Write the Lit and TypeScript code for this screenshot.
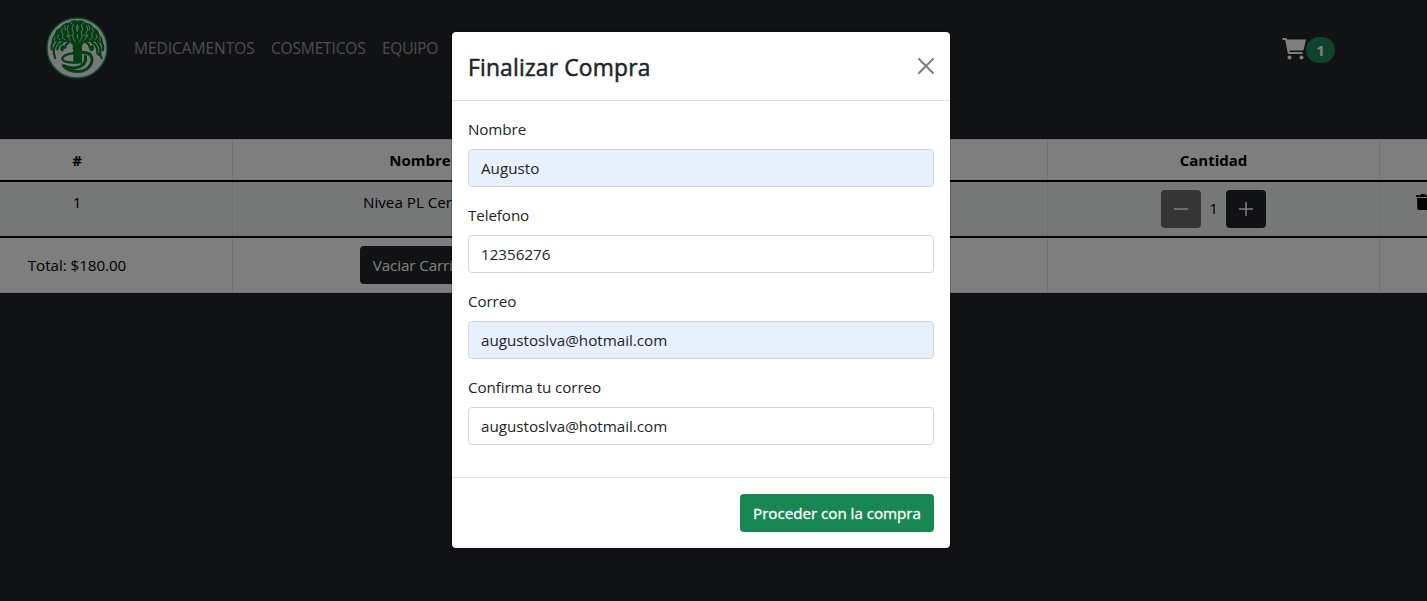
import { LitElement, html, css, svg } from "lit";
import { customElement, property } from "lit/decorators.js";
import { classMap } from "lit/directives/class-map.js";

const FONT = css`"Open Sans", "Noto Sans", sans-serif`;

@customElement("brand-logo")
export class BrandLogo extends LitElement {
  static styles = css`
    :host { display: block; width: 62px; height: 62px; }
    svg { display: block; width: 100%; height: 100%; }
    .disc { fill: #f0f0f0; stroke: #139a56; stroke-width: 4; }
    .ink { fill: #007d26; }
    .crown { fill: #007d26; }
    .branch { fill: none; stroke: #007d26; stroke-width: 6.500; stroke-linecap: round; }
    .gap { fill: none; stroke: #e4e8e4; stroke-width: 2.600; stroke-linecap: round; }
    .body { fill: none; stroke: #007d26; stroke-linecap: round; stroke-linejoin: round; }
    .loop { stroke-width: 7; }
    .bowl { stroke-width: 9; }
  `;
  render() {
    return html`<svg viewBox="49 51 184 185" aria-label="Logo">
      <circle class="disc" cx="141" cy="143.500" r="89.500" />
      <path class="crown" d="M66 128Q64 112 74 104Q76 88 92 82Q100 68 116 68Q128 58 142 62Q158 58 168 68Q184 70 190 82Q206 88 208 104Q220 114 217 130Q200 122 182 126Q164 122 156 136H128Q122 122 104 126Q84 122 66 128Z" />
      <path class="gap" d="M136 124Q124 112 130 98Q122 88 130 74M148 124Q160 112 154 98Q162 88 154 74M142 116V104M142 94Q136 84 142 74Q148 84 142 94M122 120Q108 110 116 98Q106 88 116 76M162 120Q176 110 168 98Q178 88 168 76M106 120Q92 112 100 102Q90 96 98 84M178 120Q192 112 184 102Q194 96 186 84M90 118Q78 114 86 104M194 118Q206 114 198 104M74 122Q70 116 76 110M210 122Q214 116 208 110M106 90Q108 80 104 76M178 90Q182 80 176 76M124 104Q118 110 112 108M160 104Q166 110 172 108M122 66L126 72M162 66L158 72" />
      <path class="branch" d="M70 126Q62 138 66 148M84 126Q70 138 72 162M98 128Q84 134 82 148M214 126Q222 138 218 150M200 126Q214 138 210 164L215 174M186 128Q200 134 202 152Q200 160 206 164M72 160L76 174M116 128Q106 132 106 142Q94 146 98 150M168 128Q178 130 178 140M187 138Q192 148 184 150Q176 146 187 138M100 138Q90 144 96 150" />
      <path class="ink" d="M129 133H156V190H130V154Q126 146 129 133Z" />
      <path class="body loop" d="M130 159Q98 164 97 176Q98 188 140 187" />
      <path class="body bowl" d="M158 157Q184 156 186 178Q184 202 158 212Q116 218 100 196Q126 208 150 199Q170 190 166 168" />
    </svg>`;
  }
}

@customElement("store-nav")
export class StoreNav extends LitElement {
  static styles = css`
    :host { display: block; }
    .bar { display: flex; align-items: center; height: 96px; padding: 0 92px 0 46px; font: 15.5px/24px ${FONT}; }
    .links { display: flex; gap: 16px; margin-left: 26px; flex: 1; color: rgba(255, 255, 255, 0.55); }
    .link { white-space: nowrap; }
    .l0 { width: 121px; letter-spacing: -0.03px; }
    .l1 { width: 95px; letter-spacing: -0.15px; }
    .l2 { letter-spacing: -0.25px; }
    .cart { display: flex; align-items: center; padding-top: 3px; }
    .cart svg { display: block; width: 24px; height: 22px; margin-bottom: 2px; fill: #fff; }
    .badge { width: 29px; height: 26px; border-radius: 13px; background: #198754; color: #fff; text-align: center; font-weight: 700; line-height: 26px; font-size: 15px; }
  `;
  render() {
    return html`<nav class="bar">
      <brand-logo></brand-logo>
      <div class="links">
        ${["MEDICAMENTOS", "COSMETICOS", "EQUIPO"].map((t, i) => html`<span class="link l${i}">${t}</span>`)}
      </div>
      <div class="cart">
        <svg viewBox="0 0 24 22"><path d="M.6 0H4Q4.900 0 5.100.9L5.200 1.500H24L21.800 11.200Q21.500 12.600 20 12.600H7.400L7.700 14H20.500V16H6.700Q6 16 5.800 15.200L3.200 2H.6Z" /><circle cx="7.500" cy="19.600" r="2" /><circle cx="19.500" cy="19.600" r="2" /></svg>
        <span class="badge">1</span>
      </div>
    </nav>`;
  }
}

const minus = svg`<path d="M1.500 8H14.500" />`;
const plus = svg`<path d="M1.500 8H14.500M8 1.500V14.500" />`;

@customElement("cart-table")
export class CartTable extends LitElement {
  static styles = css`
    :host { display: block; overflow: hidden; }
    .table { width: 1545px; margin-left: -78px; font: 15.2px/24px ${FONT}; color: #000; border-top: 1px solid #dee2e6; border-bottom: 1px solid #dee2e6; box-sizing: border-box; background: #fafdfb; }
    .row { display: grid; grid-template-columns: 311px 375px 220px 220px 332px 87px; }
    .cell { box-sizing: border-box; padding: 8px; border-right: 1px solid #dee2e6; text-align: center; white-space: nowrap; }
    .head { font-weight: 700; height: 40px; font-size: 15px; }
    .item { height: 58px; box-sizing: border-box; border-top: 2px solid #000; border-bottom: 2px solid #000; background: #edf0ee; }
    .item .cell { border-color: #dfe2e0; }
    .foot { height: 54px; }
    .total { padding-top: 15px; }
    .total span { letter-spacing: -0.05px; }
    .product { display: inline-block; width: 114px; overflow: hidden; text-align: left; letter-spacing: 0; }
    .btn { display: inline-flex; align-items: center; justify-content: center; height: 38px; box-sizing: border-box; border-radius: 4px; background: #212529; color: #fff; font: 15.2px/24px ${FONT}; border: 0; padding: 0 12px; }
    .wide { width: 121px; letter-spacing: -0.1px; }
    .qty { display: flex; justify-content: center; align-items: center; gap: 8px; }
    .qty .btn { width: 40px; padding: 0; }
    .qty .off { background: #6b6b6b; }
    .qty svg { width: 16px; height: 16px; stroke: #fff; stroke-width: 1.500; fill: none; stroke-linecap: round; }
    .num { width: 9px; padding-bottom: 2px; }
    .trash { display: block; width: 16px; height: 16px; margin: 4px auto 0; }
  `;
  render() {
    return html`<div class="table">
      <div class="row head">
        <div class="cell">#</div><div class="cell">Nombre</div><div class="cell"></div><div class="cell"></div><div class="cell">Cantidad</div><div class="cell"></div>
      </div>
      <div class="row item">
        <div class="cell">1</div>
        <div class="cell"><span class="product">Nivea PL Cer</span></div>
        <div class="cell"></div><div class="cell"></div>
        <div class="cell qty">
          <button class="btn off"><svg viewBox="0 0 16 16">${minus}</svg></button>
          <span class="num">1</span>
          <button class="btn"><svg viewBox="0 0 16 16">${plus}</svg></button>
        </div>
        <div class="cell"><svg class="trash" viewBox="0 0 16 16"><path d="M1 1.200H5.500L6 0H10L10.500 1.200H15V3H1ZM2 4H14V14Q14 16 12 16H4Q2.500 16 2.400 14.500Z" /></svg></div>
      </div>
      <div class="row foot">
        <div class="cell total"><span>Total: $180.00</span></div>
        <div class="cell"><button class="btn wide">Vaciar Carrito</button></div>
        <div class="cell"></div><div class="cell"></div><div class="cell"></div><div class="cell"></div>
      </div>
    </div>`;
  }
}

interface Field { label: string; value: string; filled: boolean; }

@customElement("checkout-modal")
export class CheckoutModal extends LitElement {
  @property({ attribute: false }) fields: Field[] = [
    { label: "Nombre", value: "Augusto", filled: true },
    { label: "Telefono", value: "12356276", filled: false },
    { label: "Correo", value: "augustoslva@hotmail.com", filled: true },
    { label: "Confirma tu correo", value: "augustoslva@hotmail.com", filled: false },
  ];
  static styles = css`
    :host { display: block; width: 500px; }
    .dialog { box-sizing: border-box; background: #fff; background-clip: padding-box; border: 1px solid rgba(0, 0, 0, 0.2); border-radius: 5px; color: #212529; font: 15.2px/24px ${FONT}; }
    .header { display: flex; justify-content: space-between; height: 69px; box-sizing: border-box; padding: 16px; border-bottom: 1px solid #dee2e6; }
    .title { margin: 0; font-weight: 400; -webkit-text-stroke: 0.5px #212529; font-size: 22.8px; line-height: 39px; letter-spacing: 0.2px; }
    .close { width: 16px; height: 16px; margin-top: 10px; stroke: #7f7f7f; stroke-width: 2; stroke-linecap: round; }
    .body { padding: 16px; height: 376px; box-sizing: border-box; }
    .field { margin-bottom: 16px; }
    .label { display: block; height: 24px; margin-bottom: 8px; letter-spacing: -0.1px; }
    .input { display: block; width: 100%; height: 38px; box-sizing: border-box; border: 1px solid #ced4da; border-radius: 4px; padding: 6px 12px; color: #212529; background: #fff; font: 15.2px/24px ${FONT}; outline: 0; }
    .filled { background: #e8f0fe; }
    .footer { display: flex; justify-content: flex-end; height: 71px; box-sizing: border-box; border-top: 1px solid #dee2e6; padding: 16px; }
    .submit { width: 194px; height: 38px; border: 0; border-radius: 4px; background: #198754; color: #fff; font: 15.2px/24px ${FONT}; -webkit-text-stroke: 0.3px #fff; padding: 0; white-space: nowrap; letter-spacing: -0.03px; }
  `;
  render() {
    return html`<div class="dialog" role="dialog">
      <div class="header"><h4 class="title">Finalizar Compra</h4><svg class="close" viewBox="0 0 16 16"><path d="M1 1L15 15M15 1L1 15" /></svg></div>
      <div class="body">
        ${this.fields.map((f) => html`<div class="field"><label class="label">${f.label}</label><input class=${classMap({ input: true, filled: f.filled })} .value=${f.value} /></div>`)}
      </div>
      <div class="footer"><button class="submit">Proceder con la compra</button></div>
    </div>`;
  }
}

@customElement("app-root")
export class AppRoot extends LitElement {
  static styles = css`
    :host { display: block; height: 601px; overflow: hidden; position: relative; background: #212529; }
    .table { display: block; margin-top: 43px; }
    .backdrop { position: absolute; inset: 0; background: rgba(0, 0, 0, 0.5); }
    .overlay { position: absolute; inset: 0; display: flex; justify-content: center; align-items: flex-start; padding: 31px 25px 0 0; }
  `;
  render() {
    return html`<store-nav></store-nav>
      <cart-table class="table"></cart-table>
      <div class="backdrop"></div>
      <div class="overlay"><checkout-modal></checkout-modal></div>`;
  }
}
